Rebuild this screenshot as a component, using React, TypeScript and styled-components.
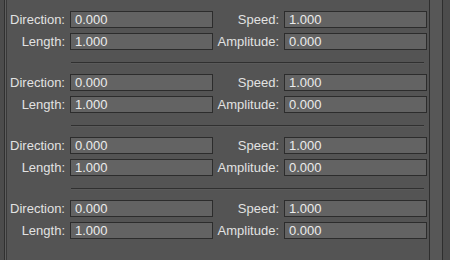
import React from "react";
import styled, { createGlobalStyle } from "styled-components";

const GlobalStyle = createGlobalStyle`
  html, body {
    margin: 0;
    padding: 0;
    background: #545454;
  }
  body {
    font-family: "Liberation Sans", Arial, sans-serif;
    font-size: 13px;
  }
`;

const Window = styled.div`
  display: flex;
  width: 450px;
  height: 260px;
  overflow: hidden;
  background: #545454;
`;

const OuterStrip = styled.div`
  width: 4px;
  flex: none;
  background: #4c4c4c;
  border-right: 1px solid #303030;
`;

const Panel = styled.div`
  flex: none;
  width: 425px;
  display: flex;
  flex-direction: column;
  padding-top: 11px;
  box-sizing: border-box;
  border-left: 1px solid #5e5e5e;
  box-shadow: inset 1px 0 0 #393939;
  padding-left: 1px;
  border-right: 1px solid #2e2e2e;
`;

const ScrollColumn = styled.div`
  width: 12px;
  flex: none;
  background: #575757;
  border-right: 1px solid #2e2e2e;
`;

const Rest = styled.div`
  flex: 1;
  background: #4c4c4c;
`;

const Group = styled.div`
  display: grid;
  grid-template-columns: 63px 143px 71px 143px;
  grid-auto-rows: 17px;
  row-gap: 5px;
`;

const Label = styled.label`
  color: #e2e2e2;
  text-align: right;
  padding-right: 5px;
  line-height: 17px;
  white-space: nowrap;
`;

const Field = styled.div`
  box-sizing: border-box;
  height: 17px;
  background: #636363;
  border: 1px solid #2c2c2c;
  color: #ececec;
  padding-left: 4px;
  line-height: 15px;
`;

const Separator = styled.div`
  height: 1px;
  margin: 12px 5px 11px 64px;
  background: #303030;
  box-shadow: 0 1px 0 #5a5a5a;
`;

interface WaveGroupProps {
  direction: string;
  speed: string;
  length: string;
  amplitude: string;
}

const WaveGroup = (props: WaveGroupProps) => (
  <Group>
    <Label>Direction:</Label>
    <Field>{props.direction}</Field>
    <Label>Speed:</Label>
    <Field>{props.speed}</Field>
    <Label>Length:</Label>
    <Field>{props.length}</Field>
    <Label>Amplitude:</Label>
    <Field>{props.amplitude}</Field>
  </Group>
);

const waves: WaveGroupProps[] = [
  { direction: "0.000", speed: "1.000", length: "1.000", amplitude: "0.000" },
  { direction: "0.000", speed: "1.000", length: "1.000", amplitude: "0.000" },
  { direction: "0.000", speed: "1.000", length: "1.000", amplitude: "0.000" },
  { direction: "0.000", speed: "1.000", length: "1.000", amplitude: "0.000" },
];

const App = () => (
  <>
    <GlobalStyle />
    <Window>
      <OuterStrip />
      <Panel>
        {waves.map((w, i) => (
          <React.Fragment key={i}>
            {i > 0 && <Separator />}
            <WaveGroup {...w} />
          </React.Fragment>
        ))}
      </Panel>
      <ScrollColumn />
      <Rest />
    </Window>
  </>
);

export default App;
